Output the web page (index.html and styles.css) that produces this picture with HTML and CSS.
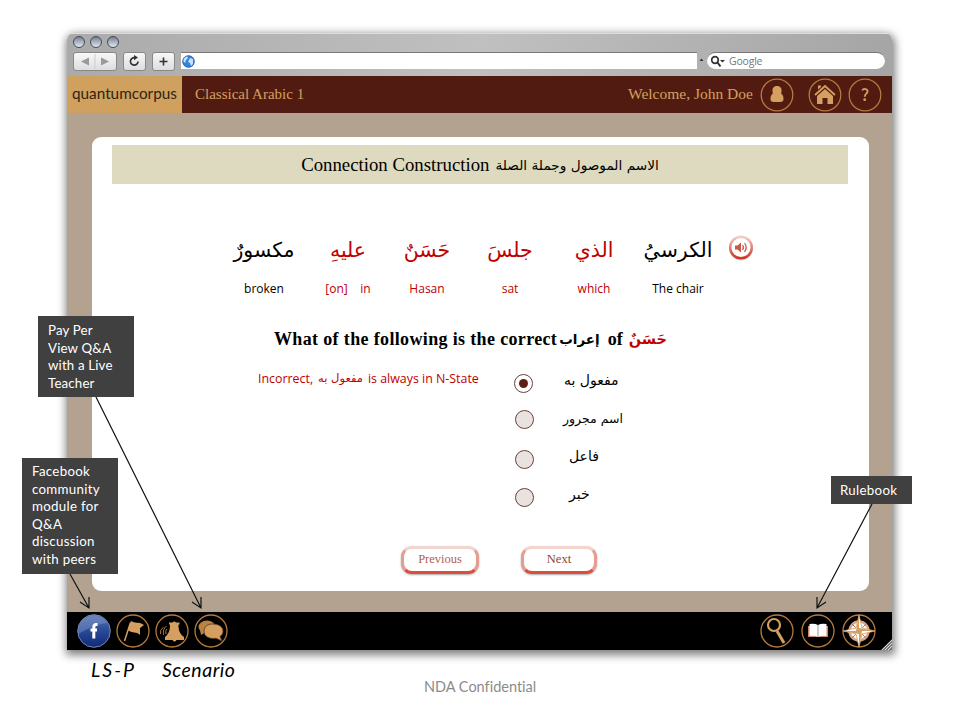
FILE: index.html
```html
<!DOCTYPE html>
<html lang="en">
<head>
<meta charset="utf-8">
<title>Classical Arabic 1</title>
<link rel="stylesheet" href="styles.css">
</head>
<body>
<div class="window">
  <div class="chrome">
    <div class="lights"><i></i><i></i><i></i></div>
    <div class="tools">
      <div class="tool nav"><svg width="42" height="17" viewBox="0 0 42 17"><path d="M7 8.500l8-4v8zM35 8.500l-8-4v8z" fill="#999"/><path d="M21 1v15" stroke="#ccc"/></svg></div>
      <div class="tool reload"><svg width="21" height="17" viewBox="0 0 21 17"><path d="M14 8.500a3.800 3.800 0 1 1-3.500-3.900" fill="none" stroke="#333" stroke-width="1.700"/><path d="M10 2l4 2.600-4 2.600z" fill="#333"/></svg></div>
      <div class="tool add"><svg width="21" height="17" viewBox="0 0 21 17"><path d="M10.500 4.500v8M6.500 8.500h8" stroke="#333" stroke-width="1.600"/></svg></div>
      <div class="address"><svg width="13" height="13" viewBox="0 0 13 13"><circle cx="6.500" cy="6.500" r="6" fill="#3484dc"/><path d="M2 3l3-2 1 2-2 2-1 3-2-2zM8 3l3 1v5l-2 2-1-3-2-1z" fill="#c5e4ff"/><circle cx="6.500" cy="6.500" r="5.800" fill="none" stroke="#24559b" stroke-width=".7"/></svg></div>
      <svg class="caret" width="10" height="19" viewBox="0 0 10 19"><path d="M2.500 9l2-2.500 2 2.500z" fill="#333"/></svg>
      <div class="search"><svg width="17" height="13" viewBox="0 0 17 13"><circle cx="5" cy="5" r="3.300" fill="none" stroke="#333" stroke-width="1.700"/><path d="M7.500 7.500l3 4" stroke="#333" stroke-width="2"/><path d="M10 5h5l-2.500 2.500z" fill="#333"/></svg><span>Google</span></div>
    </div>
  </div>
  <header class="header">
    <div class="logo"><span>quantumcorpus</span></div>
    <div class="course">Classical Arabic 1</div>
    <div class="welcome">Welcome, John Doe</div>
    <svg class="icon user" width="34" height="34" viewBox="0 0 34 34"><circle cx="17" cy="17" r="15.800" class="ring"/><path class="gold" d="M17 8c3.500 0 5 2.500 4.500 5.500 0 1-.5 1.500-.3 2C23 17 23.500 18.500 23.500 21c0 2.500-1 3-6.500 3s-6.500-.5-6.500-3c0-2.500.5-4 2.300-5.500.2-.5-.3-1-.3-2C12 10.500 13.500 8 17 8z"/></svg>
    <svg class="icon home" width="34" height="34" viewBox="0 0 34 34"><circle cx="17" cy="17" r="15.800" class="ring"/><path class="gold" d="M10 11.500V7.500h3v1.500zM9 18l8-7 8 7v8h-5.500v-6h-5v6H9z"/><path d="M7 17L17 8l10 9" fill="none" stroke="#d5a05f" stroke-width="1.800"/></svg>
    <svg class="icon help" width="34" height="34" viewBox="0 0 34 34"><circle cx="17" cy="17" r="15.800" class="ring"/><path d="M14.300 12.500c1-2.500 5.700-1.800 5.200 1.200-.4 2-2.700 2-2.700 5" fill="none" stroke="#d5a05f" stroke-width="1.800"/><circle cx="16.700" cy="21.700" r="1.400" class="gold"/></svg>
  </header>
  <main class="stage">
    <section class="card">
      <h1 class="title"><span>Connection Construction</span><span class="ar" dir="rtl">الاسم الموصول وجملة الصلة</span></h1>
      <div class="sentence">
        <div class="word w1"><span class="ar" dir="rtl">مكسورٌ</span><small>broken</small></div>
        <div class="word w2 red"><span class="ar" dir="rtl">عليهِ</span><small>[on] &nbsp;&nbsp; in</small></div>
        <div class="word w3 red"><span class="ar" dir="rtl">حَسَنٌ</span><small>Hasan</small></div>
        <div class="word w4 red"><span class="ar" dir="rtl">جلسَ</span><small>sat</small></div>
        <div class="word w5 red"><span class="ar" dir="rtl">الذي</span><small>which</small></div>
        <div class="word w6"><span class="ar" dir="rtl">الكرسيُ</span><small>The chair</small></div>
        <svg class="speaker" width="28" height="28" viewBox="0 0 28 28"><defs><linearGradient id="rim" x2="0" y2="1"><stop stop-color="#f3d0c7"/><stop offset="1" stop-color="#cc3524"/></linearGradient></defs><circle cx="14" cy="14.500" r="12" fill="#ddd"/><circle cx="14" cy="13.500" r="10.800" fill="#fff" stroke="url(#rim)" stroke-width="2.500"/><path d="M8 11.500h2.500L14 8.500v10l-3.500-3H8z" fill="#cb5844"/><path d="M15.500 11q2 2.500 0 5M17.500 9q3.500 4.500 0 9" fill="none" stroke="#cb5844" stroke-width="1.200"/></svg>
      </div>
      <div class="question"><span class="q1">What of the following is the correct</span><span class="ar" dir="rtl">إعراب</span><span class="q2">of</span><span class="ar red" dir="rtl">حَسَنٌ</span></div>
      <div class="answers">
        <p class="feedback red"><span>Incorrect,</span><span class="ar" dir="rtl">مفعول به</span><span>is always in N-State</span></p>
        <div class="options">
          <label class="option o1"><i class="radio on"></i><span class="ar" dir="rtl">مفعول به</span></label>
          <label class="option o2"><i class="radio"></i><span class="ar" dir="rtl">اسم مجرور</span></label>
          <label class="option o3"><i class="radio"></i><span class="ar" dir="rtl">فاعل</span></label>
          <label class="option o4"><i class="radio"></i><span class="ar" dir="rtl">خبر</span></label>
        </div>
      </div>
      <div class="buttons"><button class="prev">Previous</button><button class="next">Next</button></div>
    </section>
  </main>
  <footer class="dock">
    <svg width="34" height="34" viewBox="0 0 34 34"><defs><linearGradient id="fb" x2="0" y2="1"><stop stop-color="#5873b0"/><stop offset=".5" stop-color="#294996"/><stop offset="1" stop-color="#102a75"/></linearGradient></defs><circle cx="17" cy="17" r="16.300" fill="url(#fb)" stroke="#7189b8"/><path d="M1.500 20A15.500 15.500 0 0 1 30 9Q18 10 1.500 20z" fill="#8ba4d2" opacity=".4"/><path d="M20.500 10.500h-1.500q-2.200 0-2.200 3v11M13.500 16h6.500" fill="none" stroke="#fff" stroke-width="3"/></svg>
    <svg width="34" height="34" viewBox="0 0 34 34"><circle cx="17" cy="17" r="16" class="ring"/><path d="M14.500 8.500L8.500 27" stroke="#d5a05f" stroke-width="1.500"/><path class="gold" d="M15 7c4 3 7 0 13 4l-4 3 0 7c-4-4-7-1-12-5z"/></svg>
    <svg width="34" height="34" viewBox="0 0 34 34"><circle cx="17" cy="17" r="16" class="ring"/><path class="gold" d="M17.500 8.500q1.500-2 3.500 0h3.500v2h-1c0 6 1 9 5.500 12.500v3h-7.500q-2 3-4 0H10v-3c4-3.500 5-6.500 5-12.500h-1v-2z"/><path d="M11.500 12q-4 3-3 9M8.500 13q-4 3-3 7M12 15q-2 2-1 5" class="wave"/></svg>
    <svg width="34" height="34" viewBox="0 0 34 34"><circle cx="17" cy="17" r="16" class="ring"/><ellipse cx="13" cy="13" rx="8.500" ry="6.500" fill="#b98343"/><path fill="#b98343" d="M6 16l1 5 5-3z"/><path d="M19 10c6 0 10 3 10 7 0 2.500-1 4-3 5.500l2 4.500-6-2.700c-7 1-12-2-12-7s4-7.300 9-7.300z" class="gold" stroke="#5a3519" stroke-width=".8"/></svg>
    <span class="space"></span>
    <svg width="34" height="34" viewBox="0 0 34 34"><circle cx="17" cy="17" r="16" class="ring"/><circle cx="14" cy="11" r="6" fill="none" stroke="#d5a05f" stroke-width="2.200"/><path d="M17 17l7 12" stroke="#d5a05f" stroke-width="3"/></svg>
    <svg width="34" height="34" viewBox="0 0 34 34"><circle cx="17" cy="17" r="16" class="ring"/><path d="M7 12h20v11H7z" fill="#c98766"/><path d="M8.500 10q5-1 8.500 1 3.500-2 8.500-1v12q-5-1-8.500 1-3.500-2-8.500-1z" fill="#fff"/><path d="M17 11v12" stroke="#999"/></svg>
    <svg width="34" height="34" viewBox="0 0 34 34"><circle cx="17" cy="17" r="16" class="ring"/><circle cx="17" cy="17" r="9.500" fill="#fff" stroke="#d7a68c" stroke-width="2.500"/><path d="M10 10l14 14M24 10L10 24" stroke="#bd7659" stroke-width="1"/><path d="M17 1l3 13 13 3-13 3-3 13-3-13-13-3 13-3z" fill="#fff" stroke="#d5a05f" stroke-width=".8"/><path d="M17 1v16h-3zM33 17H17v-3zM17 33V17h3zM1 17h16v3z" fill="#d5a05f"/></svg>
    <svg class="grip" width="12" height="12" viewBox="0 0 12 12"><path d="M1 12L12 1v11z" fill="#777"/><path d="M2 12L12 2M5 12l7-7M8 12l4-4" stroke="#ddd"/></svg>
  </footer>
</div>
<div class="under"><div class="scenario"><span>LS-P</span><span class="second">Scenario</span></div><div class="nda">NDA Confidential</div></div>
<svg class="arrows" width="960" height="720" viewBox="0 0 960 720"><path d="M96 397L201 608M192 602l9 6 0-11M70 574L89 608M80 602l9 6 0-11M872 504L817 608M817 597l0 11 9-6"/></svg>
<aside class="note live">Pay Per<br>View Q&amp;A<br>with a Live<br>Teacher</aside>
<aside class="note peers">Facebook<br>community<br>module for<br>Q&amp;A<br>discussion<br>with peers</aside>
<aside class="note rules">Rulebook</aside>
</body>
</html>
```
FILE: styles.css
```css
* { box-sizing: border-box; }
body { margin: 0; width: 960px; height: 720px; overflow: hidden; padding: 33px 0 0 67px; background: #fff; font-family: "Open Sans", sans-serif; position: relative; }
svg { display: block; flex: none; }
span, small { white-space: nowrap; }
.window { width: 825px; height: 617px; border-radius: 7px 7px 0 0; box-shadow: 1px 3px 9px 2px rgba(0,0,0,.5); display: flex; flex-direction: column; overflow: hidden; }
.chrome { height: 43px; background: linear-gradient(100deg, #aaa, #c0c0c0 50%, #a5a5a5); border-top: 1px solid #ddd; padding-left: 6px; }
.lights { display: flex; gap: 5px; padding-top: 2px; height: 18px; }
.lights i { width: 12px; height: 12px; border: 1.5px solid #444c57; border-radius: 50%; background: linear-gradient(#76808d, #e1e9f1); }
.tools { display: flex; height: 19px; }
.tool { height: 19px; border: 1px solid #888; border-radius: 3px; background: linear-gradient(#f8f8f8, #ddd); }
.nav { width: 44px; }
.reload { width: 23px; margin-left: 6px; }
.add { width: 23px; margin-left: 6px; }
.address { width: 516px; margin-left: 6px; height: 17px; background: #fff; border-top: 1px solid #777; padding: 2px 1px; }
.search { width: 178px; height: 17px; border-radius: 9px; background: #fff; border-top: 1px solid #777; display: flex; align-items: center; padding-left: 3px; gap: 2px; font-size: 10.500px; color: #777; }
.search span { letter-spacing: -.2px; }
.caret { width: 10px; }
.header { height: 37px; background: #521b12; display: flex; align-items: center; color: #d5a05f; font-family: "Liberation Serif", serif; font-size: 15.500px; }
.logo { width: 115px; height: 37px; background: #d0a05e; color: #2e2513; font: 400 15.300px/34px Lato, sans-serif; padding-left: 5px; }
.course { margin-left: 13px; width: 433px; font-size: 15px; padding-bottom: 1px; }
.welcome { width: 132px; white-space: nowrap; padding-bottom: 1px; }
.home { margin-left: 14px; }
.help { margin-left: 6px; }
.ring { fill: none; stroke: #b3793d; stroke-width: 1.300; }
.gold { fill: #d5a05f; }
.wave { fill: none; stroke: #b3793d; }
.stage { height: 499px; background: #b4a290; padding: 24px 23px 21px 25px; }
.card { height: 454px; border-radius: 9px; background: #fff; padding: 8px 21px 0 20px; }
.title { margin: 0; height: 39px; background: #dedabf; display: flex; justify-content: center; align-items: center; gap: 6px; font: 400 18.800px "Liberation Serif", serif; }
.ar { font-family: "DejaVu Sans", sans-serif; }
.red { color: #c00000; }
.title .ar { font-size: 13.700px; }
.sentence { display: grid; grid-template-columns: 84px 84px 74px 92px 76px 92px 28px; margin: 45px 0 0 110px; height: 75px; }
.word { display: flex; flex-direction: column; align-items: center; }
.word .ar { font-size: 20.500px; line-height: 42px; height: 50px; }
.word small { font-size: 12px; line-height: 20px; }
.speaker { margin: 5px 0 0 3px; }
.question { display: flex; align-items: center; margin: 20px 0 0 162px; height: 30px; font: bold 18px "Liberation Serif", serif; }
.q1 { letter-spacing: .35px; }
.question .ar { font-size: 13.500px; margin: 0 8px 0 2px; }
.q2 { margin-right: 6px; }
.question .ar.red { font-size: 14.500px; margin: 0; }
.answers { display: flex; height: 159px; }
.feedback { margin: 13px 0 0 146px; height: 22px; width: 255px; display: flex; align-items: center; gap: 5px; font-size: 12.400px; }
.feedback .ar { font-size: 11.500px; }
.options { padding-top: 7px; }
.option { display: flex; height: 38px; align-items: center; }
.option .ar { font-size: 14px; }
.radio { flex: none; width: 19px; height: 19px; border-radius: 50%; border: 1.500px solid #6b4038; background: #e9e2df; display: flex; align-items: center; justify-content: center; margin: 0 30px 0 2px; }
.on { background: #fff; margin: 6px 31px 0 1px; }
.on::after { content: ""; width: 9px; height: 9px; border-radius: 50%; background: #5b2014; }
.o2 .radio { margin-top: 3px; margin-right: 29px; }
.o2 .ar { font-size: 12.500px; }
.o3 .radio { margin-top: 6px; margin-right: 35px; }
.o4 .radio { margin-top: 6px; margin-right: 35px; }
.buttons { display: flex; gap: 42px; margin: 33px 0 0 289px; }
button { height: 28px; padding: 0 0 1px; border: 3px solid; border-color: #f1d5ce #e79c90 #dc4b3c; border-radius: 11px; background: #fff; box-shadow: 0 1px 2px #aaa; font: 12.500px "Liberation Serif", serif; color: #b45e50; }
.prev { width: 78px; }
.next { width: 76px; color: #8d4438; }
.dock { height: 38px; background: #000; display: flex; align-items: center; gap: 5px; padding-left: 10px; }
.space { width: 522px; }
.dock svg:nth-of-type(6), .dock svg:nth-of-type(7) { margin-left: 2px; }
.grip { align-self: flex-end; margin-left: -1px; }
.under { height: 70px; }
.scenario { display: flex; gap: 26px; padding: 8px 0 0 24px; height: 26px; font: italic 19.500px/24px Lato, sans-serif; letter-spacing: .5px; color: #000; }
.scenario span:first-child { letter-spacing: 2px; }
.nda { margin: 1px 0 0 357px; font: 14.500px/20px Lato, sans-serif; font-variant-ligatures: none; color: #8b8b8b; }
.arrows { position: absolute; left: 0; top: 0; fill: none; stroke: #111; stroke-width: 1.200; }
.note { position: absolute; background: #404040; color: #fff; font: 13.300px/17.600px Lato, sans-serif; letter-spacing: .3px; padding: 6px 10px; white-space: nowrap; }
.live { left: 38px; top: 316px; width: 96px; height: 81px; letter-spacing: .15px; }
.peers { left: 22px; top: 458px; width: 96px; height: 116px; padding-top: 5px; }
.rules { left: 831px; top: 476px; width: 81px; height: 28px; padding: 6px 9px; }
```
